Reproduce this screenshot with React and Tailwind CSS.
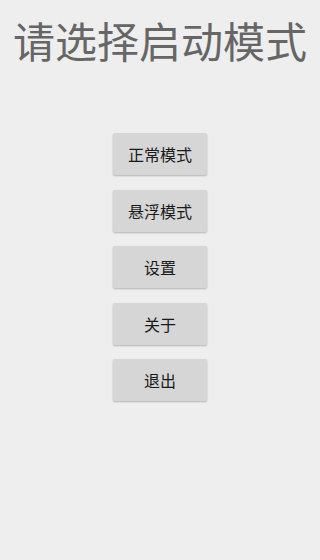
const items = ["正常模式", "悬浮模式", "设置", "关于", "退出"];

export default function App() {
  return (
    <div
      className="w-[320px] h-[560px] bg-[#eeeeee] flex flex-col items-center"
      style={{ fontFamily: '"Noto Sans CJK SC", "Noto Sans", sans-serif' }}
    >
      <h1 className="mt-[11px] text-[42px] leading-[57px] text-[#666666] font-normal">
        请选择启动模式
      </h1>
      <div className="mt-[65px] flex flex-col gap-[14.5px]">
        {items.map((label) => (
          <button
            key={label}
            className="w-[94px] h-[42px] bg-[#d6d6d6] rounded-[2px] text-[16px] font-normal text-[#1a1a1a] shadow-[0_1px_2px_rgba(0,0,0,0.25)]"
          >
            {label}
          </button>
        ))}
      </div>
    </div>
  );
}
